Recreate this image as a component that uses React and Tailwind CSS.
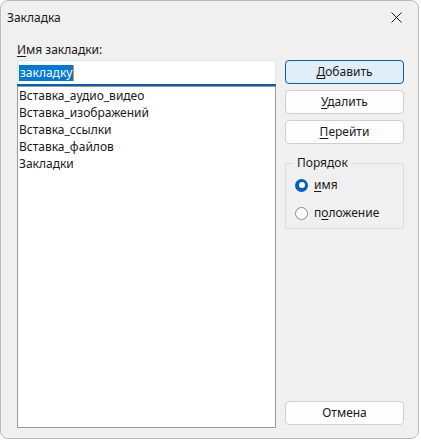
import React, { useState } from 'react';

const bookmarks = [
    'Вставка_аудио_видео',
    'Вставка_изображений',
    'Вставка_ссылки',
    'Вставка_файлов',
    'Закладки',
];

// first letter underlined, like a Windows access key
const Key = ({ children }) => <span className="underline underline-offset-[2px] decoration-1">{children}</span>;

const Radio = ({ checked, onClick, children }) => (
    <div className="flex items-center h-[20px] gap-[6px] cursor-default" onClick={onClick}>
        {checked ? (
            <span className="w-[13px] h-[13px] rounded-full bg-[#005fb8] flex items-center justify-center">
                <span className="w-[6px] h-[6px] rounded-full bg-white" />
            </span>
        ) : (
            <span className="w-[13px] h-[13px] rounded-full border border-[#8a8a8a] bg-white" />
        )}
        <span>{children}</span>
    </div>
);

const Button = ({ primary, children }) => (
    <button
        className={
            primary
                ? 'h-[24px] w-full rounded-[4px] border border-[#005fb8] bg-[#e0eef9] text-[#1a1a1a]'
                : 'h-[24px] w-full rounded-[4px] border border-[#d0d0d0] bg-[#fdfdfd] text-[#1a1a1a]'
        }
    >
        {children}
    </button>
);

const App = () => {
    const [order, setOrder] = useState('name');

    return (
        <div className="w-[421px] h-[441px] bg-white" style={{ fontFamily: '"Noto Sans", "Liberation Sans", Arial, sans-serif' }}>
            <div className="w-[419px] h-[439px] flex flex-col rounded-[8px] border border-[#bcbcbc] bg-[#f0f0f0] text-[12px] leading-[16px] text-[#1a1a1a]">
                {/* title bar */}
                <div className="h-[32px] flex items-center justify-between pl-[6px] pr-[16px] pt-[1px]">
                    <span>Закладка</span>
                    <svg width="11" height="11" viewBox="0 0 11 11" className="text-[#1a1a1a]">
                        <path d="M0.5 0.5 L10.5 10.5 M10.5 0.5 L0.5 10.5" stroke="currentColor" strokeWidth="1" />
                    </svg>
                </div>

                <div className="flex-1 flex gap-[9px] pl-[16px] pt-[9px] pb-[10px]">
                    {/* left column */}
                    <div className="w-[259px] flex flex-col">
                        <div className="h-[16px] mb-[2px]">
                            <Key>И</Key>мя закладки:
                        </div>
                        <div className="h-[26px] bg-white border border-b-0 border-[#e5e5e5] rounded-t-[3px] flex flex-col">
                            <div className="flex-1 flex items-center pl-[1px]">
                                <span className="bg-[#0078d7] text-white px-[1px]">закладку</span>
                                <span className="w-[1px] h-[16px] bg-[#ff8c00]" />
                            </div>
                            <div className="h-[2px] bg-[#005fb8] -mx-[1px]" />
                        </div>
                        <div className="flex-1 bg-white border border-[#9a9a9a]">
                            {bookmarks.map((b) => (
                                <div key={b} className="h-[17px] flex items-center pl-[1px]">{b}</div>
                            ))}
                        </div>
                    </div>

                    {/* right column */}
                    <div className="w-[119px] flex flex-col pt-[18px] pb-[3px]">
                        <div className="flex flex-col gap-[6px]">
                            <Button primary><Key>Д</Key>обавить</Button>
                            <Button><Key>У</Key>далить</Button>
                            <Button><Key>П</Key>ерейти</Button>
                        </div>
                        <fieldset className="mt-[11px] border border-[#dcdcdc] rounded-[3px] px-[9px] pt-[4px] pb-[5px] flex flex-col gap-[8px]">
                            <legend className="-ml-[2px] px-[4px]">Порядок</legend>
                            <Radio checked={order === 'name'} onClick={() => setOrder('name')}>
                                <Key>и</Key>мя
                            </Radio>
                            <Radio checked={order === 'pos'} onClick={() => setOrder('pos')}>
                                п<Key>о</Key>ложение
                            </Radio>
                        </fieldset>
                        <div className="flex-1" />
                        <Button>Отмена</Button>
                    </div>
                </div>
            </div>
        </div>
    );
};

export default App;
